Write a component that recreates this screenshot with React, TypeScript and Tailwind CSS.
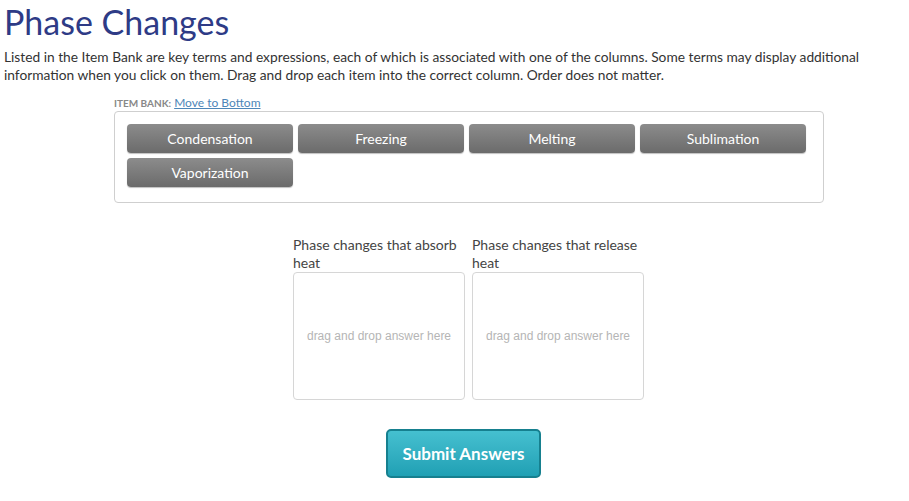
import React from "react";

const items = ["Condensation", "Freezing", "Melting", "Sublimation", "Vaporization"];

const columns = ["Phase changes that absorb heat", "Phase changes that release heat"];

export default function App() {
  return (
    <div className="min-h-[501px] bg-white px-[4px] font-['Lato',sans-serif] text-[#333]">
      <h1 className="pt-[2px] text-[34px] leading-[40px] font-normal text-[#2e3b86]">
        Phase Changes
      </h1>

      <p className="mt-[6px] text-[13.75px] leading-[18px] text-[#333]">
        Listed in the Item Bank are key terms and expressions, each of which is associated with one of the columns. Some terms may display additional
        information when you click on them. Drag and drop each item into the correct column. Order does not matter.
      </p>

      <div className="ml-[110px] mt-[11px] w-[710px]">
        <div className="flex items-baseline gap-[3px] leading-[16px]">
          <span className="text-[10px] font-bold uppercase text-[#888]">Item Bank:</span>
          <a href="#" className="text-[12px] text-[#4d86b8] underline">
            Move to Bottom
          </a>
        </div>

        <div className="h-[92px] rounded-[4px] border border-[#cfcfcf] px-[12px] pt-[12px]">
          <div className="grid grid-cols-[166px_166px_166px_166px] gap-x-[5px] gap-y-[5px]">
            {items.map((item) => (
              <div
                key={item}
                className="flex h-[29px] items-center justify-center rounded-[4px] bg-gradient-to-b from-[#8c8c8c] to-[#6b6b6b] text-[14px] text-white shadow-[0_1px_1px_rgba(0,0,0,0.25)]"
              >
                {item}
              </div>
            ))}
          </div>
        </div>
      </div>

      <div className="mt-[33px] flex justify-center gap-[7px] pl-[28px]">
        {columns.map((label) => (
          <div key={label} className="w-[172px]">
            <p className="text-[14px] leading-[18px] text-[#444]">{label}</p>
            <div className="flex h-[128px] items-center justify-center rounded-[4px] border border-[#d6d6d6] font-['Liberation_Sans',sans-serif] text-[12px] text-[#b5b5b5]">
              drag and drop answer here
            </div>
          </div>
        ))}
      </div>

      <div className="mt-[29px] flex justify-center pl-[18px]">
        <button className="h-[49px] w-[155px] rounded-[5px] border-2 border-[#16808f] bg-gradient-to-b from-[#45c0d0] to-[#1fa0b4] text-[17px] font-bold text-white">
          Submit Answers
        </button>
      </div>
    </div>
  );
}
